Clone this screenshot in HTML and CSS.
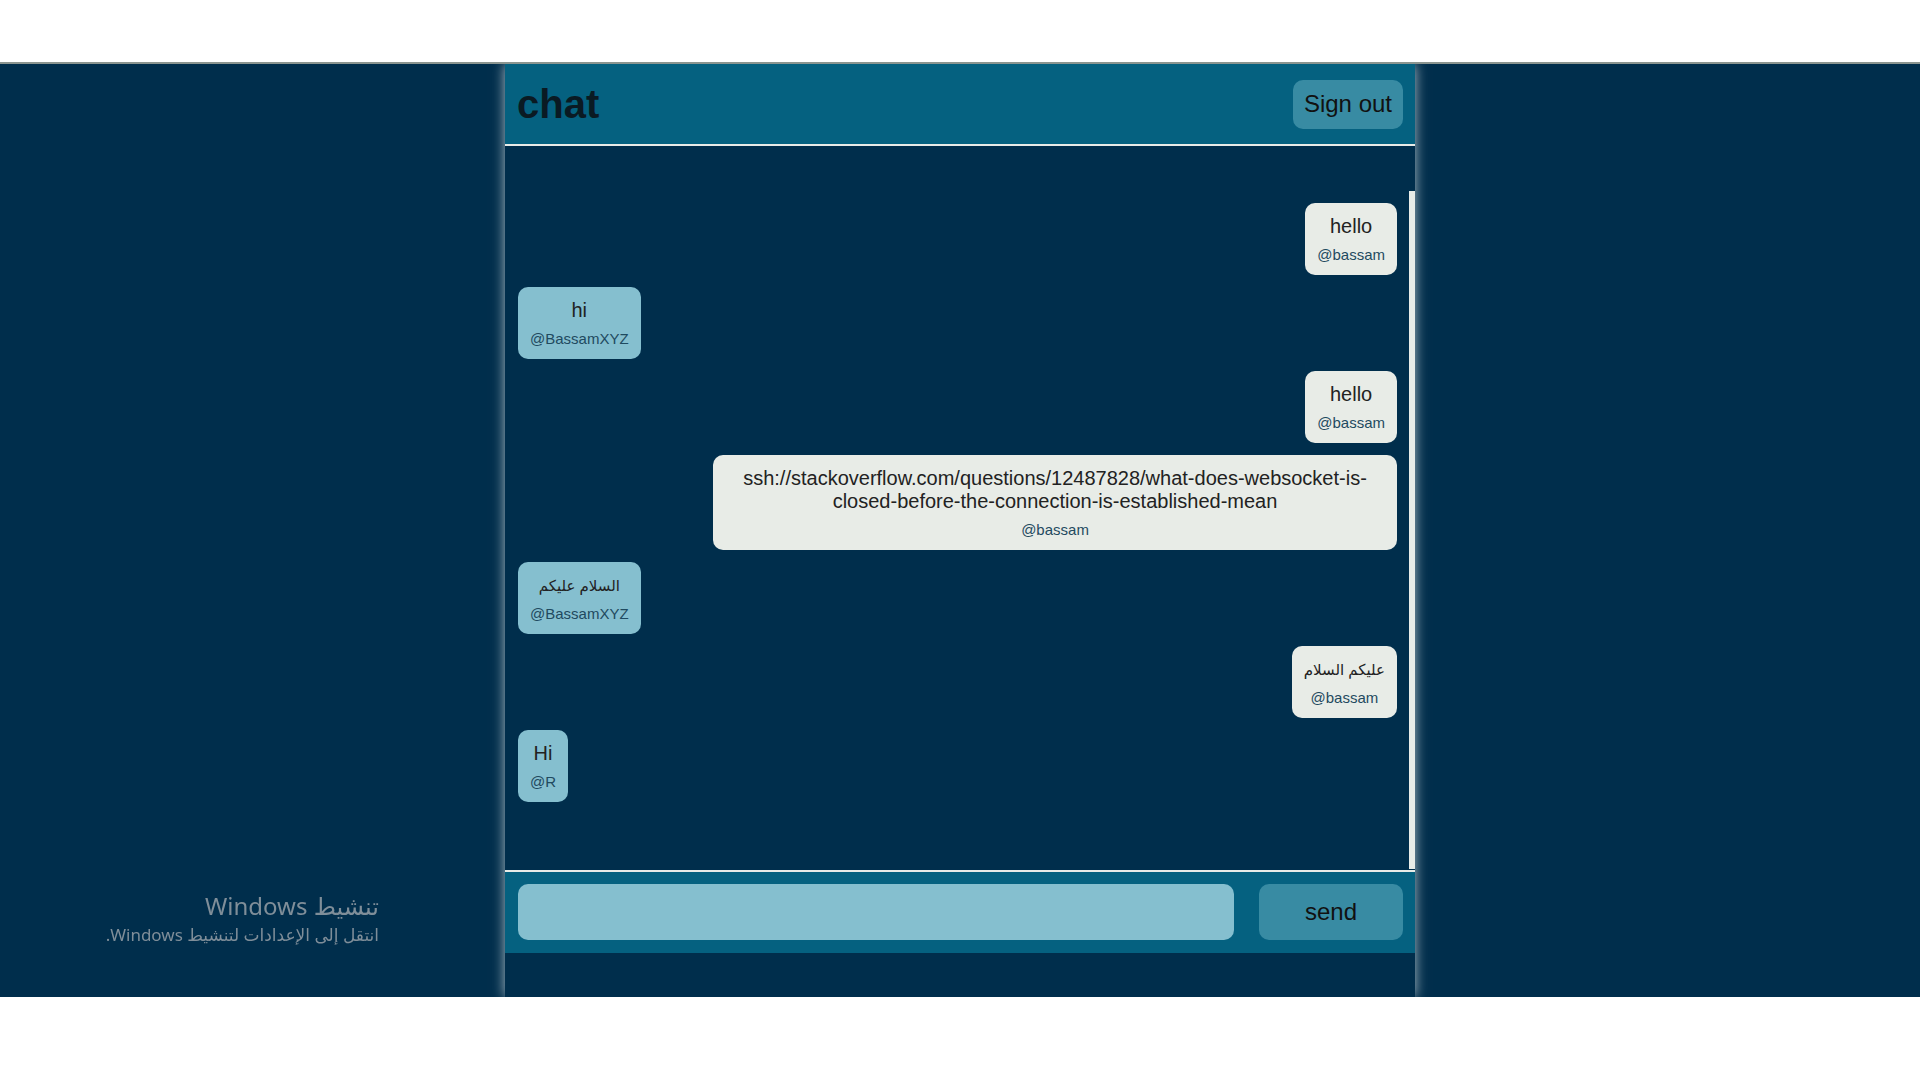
FILE: index.html
```html
<!DOCTYPE html>
<html lang="en">
<head>
  <meta charset="UTF-8" />
  <title>chat</title>
  <link rel="stylesheet" href="styles.css">
</head>
<body>
  <section class="stage">
    <div class="chat-box">
      <header class="chat-header">
        <h1>chat</h1>
        <button class="sign-out" type="button">Sign out</button>
      </header>

      <main class="chat-body">
        <div class="messages">
          <div class="msg sent">
            <p class="msg-text">hello</p>
            <span class="msg-user">@bassam</span>
          </div>
          <div class="msg received">
            <p class="msg-text">hi</p>
            <span class="msg-user">@BassamXYZ</span>
          </div>
          <div class="msg sent">
            <p class="msg-text">hello</p>
            <span class="msg-user">@bassam</span>
          </div>
          <div class="msg sent">
            <p class="msg-text">ssh://stackoverflow.com/questions/12487828/what-does-websocket-is-closed-before-the-connection-is-established-mean</p>
            <span class="msg-user">@bassam</span>
          </div>
          <div class="msg received">
            <p class="msg-text arabic" dir="auto">السلام عليكم</p>
            <span class="msg-user">@BassamXYZ</span>
          </div>
          <div class="msg sent">
            <p class="msg-text arabic" dir="auto">عليكم السلام</p>
            <span class="msg-user">@bassam</span>
          </div>
          <div class="msg received">
            <p class="msg-text">Hi</p>
            <span class="msg-user">@R</span>
          </div>
        </div>
        <!-- fake scrollbar, the list is scrolled to the bottom -->
        <div class="scroll-track">
          <div class="scroll-thumb"></div>
        </div>
      </main>

      <form class="chat-form">
        <input type="text" class="chat-input" />
        <button type="submit" class="send-btn">send</button>
      </form>
      <div class="chat-bottom"></div>
    </div>
  </section>

  <div class="activate" dir="rtl">
    <p class="activate-title">تنشيط Windows</p>
    <p class="activate-sub">انتقل إلى الإعدادات لتنشيط Windows.</p>
  </div>
</body>
</html>
```

FILE: styles.css
```css
* {
  margin: 0;
  padding: 0;
  box-sizing: border-box;
}
body {
  font-family: 'Liberation Sans', Arial, 'DejaVu Sans', sans-serif;
  background: #fff;
  color: #222;
}
.stage {
  margin-top: 62px;
  height: 935px;
  background: #002e4c;
  border-top: 2px solid #8b9590;
  overflow: hidden;
}
.chat-box {
  width: 910px;
  height: 100%;
  margin: 0 auto;
  background: #002e4c;
  box-shadow: 0 0 12px rgba(205, 215, 220, 0.85);
  display: flex;
  flex-direction: column;
}
.chat-header {
  height: 82px;
  flex-shrink: 0;
  background: #056180;
  border-bottom: 2px solid #e8ece8;
  display: flex;
  align-items: center;
  justify-content: space-between;
  padding: 0 12px 0 12px;
}
.chat-header h1 {
  font-size: 40px;
  font-weight: bold;
  color: #0a1a23;
}
.sign-out {
  height: 49px;
  padding: 0 11px;
  background: #388ba3;
  color: #111;
  font-family: inherit;
  font-size: 24px;
  border: none;
  border-radius: 10px;
  cursor: pointer;
}
.chat-body {
  flex: 1;
  display: flex;
  min-height: 0;
}
.messages {
  flex: 1;
  padding: 57px 12px 0 13px;
  display: flex;
  flex-direction: column;
  gap: 12px;
}
.msg {
  max-width: 684px;
  padding: 12px;
  border-radius: 10px;
  text-align: center;
}
.msg.sent {
  align-self: flex-end;
  background: #e8ece7;
}
.msg.received {
  align-self: flex-start;
  background: #85bfcf;
}
.msg-text {
  font-size: 20px;
  line-height: 23px;
  color: #222;
  word-break: break-word;
}
.msg-text.arabic {
  font-size: 15px;
}
.msg-user {
  display: block;
  margin-top: 8px;
  font-size: 15px;
  line-height: 17px;
  color: #1f4a60;
}
.scroll-track {
  width: 6px;
  display: flex;
  flex-direction: column;
  padding-top: 45px;
  padding-bottom: 1px;
}
.scroll-thumb {
  flex: 1;
  background: #e8ece8;
}
.chat-form {
  flex-shrink: 0;
  background: #056180;
  border-top: 2px solid #e8ece8;
  padding: 12px 12px 13px 13px;
  display: flex;
  gap: 25px;
}
.chat-input {
  flex: 1;
  height: 56px;
  border: none;
  border-radius: 10px;
  background: #85bfcf;
  padding: 0 14px;
  font-size: 20px;
  font-family: inherit;
}
.send-btn {
  width: 144px;
  height: 56px;
  border: none;
  border-radius: 10px;
  background: #388ba3;
  color: #111;
  font-family: inherit;
  font-size: 24px;
  cursor: pointer;
}
.chat-bottom {
  height: 44px;
  flex-shrink: 0;
}
.activate {
  position: fixed;
  left: 0;
  top: 890px;
  width: 379px;
  text-align: right;
  color: #7f8e99;
  font-family: 'Noto Sans', 'DejaVu Sans', sans-serif;
}
.activate-title {
  font-size: 24px;
  line-height: 32px;
}
.activate-sub {
  font-size: 17px;
  line-height: 26px;
}
```
